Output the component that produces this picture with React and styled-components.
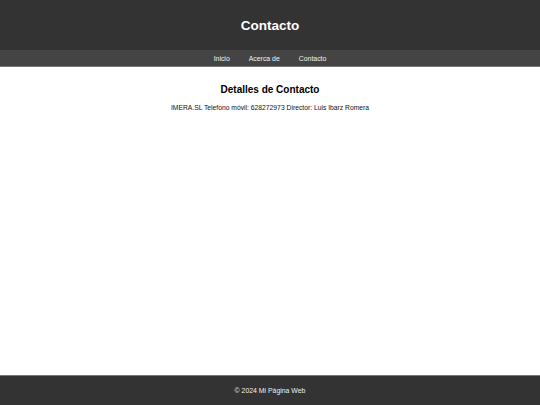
import React from "react";
import styled, { createGlobalStyle } from "styled-components";

const Global = createGlobalStyle`
  html, body { margin: 0; padding: 0; }
  body { font-family: "Liberation Sans", Arial, sans-serif; background: #fff; }
`;

const Page = styled.div`
  display: flex;
  flex-direction: column;
  min-height: 100vh;
`;

const Header = styled.header`
  background: #333;
  color: #fff;
  text-align: center;
  padding: 9.4px 0 7.4px;
`;

const Title = styled.h1`
  margin: 9px 0;
  font-size: 13.5px;
  line-height: 15.5px;
  font-weight: bold;
`;

const Nav = styled.nav`
  background: #444;
  display: flex;
  justify-content: center;
  gap: 19px;
  padding: 4.5px 0 3.5px;
  border-bottom: 1px solid #777;
`;

const NavLink = styled.a`
  color: #f2f2f2;
  text-decoration: none;
  font-size: 6.9px;
  line-height: 7.8px;
`;

const Main = styled.main`
  padding: 8.4px;
  text-align: center;
  flex: 1;
`;

const Heading = styled.h2`
  margin: 8.4px 0 9px;
  font-size: 10px;
  line-height: 11.5px;
  font-weight: bold;
`;

const Text = styled.p`
  margin: 0;
  font-size: 6.75px;
  line-height: 7.8px;
  color: #111;
`;

const Footer = styled.footer`
  background: #333;
  color: #eee;
  text-align: center;
  padding: 4px 0;
  border-top: 1px solid #777;
`;

const FooterText = styled.p`
  margin: 6.4px 0;
  font-size: 6.9px;
  line-height: 7.8px;
`;

export default function App() {
  return (
    <>
      <Global />
      <Page>
        <Header>
          <Title>Contacto</Title>
        </Header>
        <Nav>
          <NavLink href="#">Inicio</NavLink>
          <NavLink href="#">Acerca de</NavLink>
          <NavLink href="#">Contacto</NavLink>
        </Nav>
        <Main>
          <Heading>Detalles de Contacto</Heading>
          <Text>IMERA.SL Telefono móvil: 628272973 Director: Luis Ibarz Romera</Text>
        </Main>
        <Footer>
          <FooterText>© 2024 Mi Página Web</FooterText>
        </Footer>
      </Page>
    </>
  );
}
